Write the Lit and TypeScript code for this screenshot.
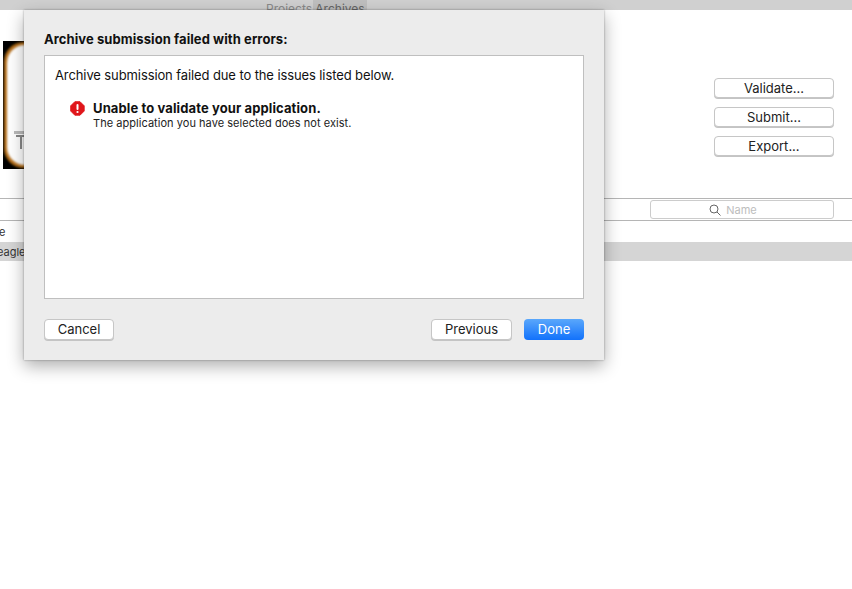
import { LitElement, html, css } from "lit";
import { customElement } from "lit/decorators.js";

@customElement("app-root")
export class AppRoot extends LitElement {
  static styles = css`
    :host { display: block; position: relative; width: 852px; height: 589px; overflow: hidden; background: #fff; font-family: Inter, "Liberation Sans", sans-serif; color: #1a1a1a; font-size: 13px; }
    .tabs { height: 10px; background: #d0d0d0; display: flex; justify-content: flex-start; padding-left: 266px; overflow: hidden; font-size: 12px; line-height: 10px; color: #8a8a8a; }
    .tab { height: 10px; display: flex; align-items: flex-end; line-height: 12px; white-space: nowrap; }
    .tab span { position: relative; top: 5px; }
    .tab.p { width: 47px; }
    .tab.a { width: 54px; background: #bfbfbf; color: #666; justify-content: center; }
    .head { height: 188px; display: flex; justify-content: space-between; box-sizing: border-box; padding: 31px 18px 0 3px; }
    .thumb { width: 40px; height: 128px; background: #000; display: block; }
    .side { display: flex; flex-direction: column; gap: 9px; padding-top: 37px; }
    .btn { box-sizing: border-box; background: #fff; border: 1px solid #c6c6c6; border-radius: 4px; height: 21px; display: flex; align-items: center; justify-content: center; font-size: 13px; line-height: 17px; padding-bottom: 1px; box-shadow: 0 1px 0 #c4c4c4; color: #222; }
    .side .btn { width: 120px; height: 20px; padding-bottom: 0; }
    .bar { height: 23px; box-sizing: border-box; border-top: 1px solid #b5b5b5; border-bottom: 1px solid #b5b5b5; display: flex; justify-content: flex-end; padding: 1px 18px 0 0; }
    .search { box-sizing: border-box; width: 184px; height: 19px; border: 1px solid #ccc; border-radius: 3px; background: #fff; display: flex; align-items: center; justify-content: center; gap: 5px; color: #bdbdbd; font-size: 11px; padding-right: 18px; }
    .row { height: 21px; display: flex; align-items: center; font-size: 11px; overflow: hidden; color: #333; }
    .row.sel { height: 19px; background: #d5d5d5; }
    .row span { white-space: nowrap; margin-left: -1px; }
    .row.sel span { margin-left: -3px; }
    .dialog { position: absolute; left: 24px; top: 10px; width: 580px; height: 350px; box-sizing: border-box; background: #ececec; padding: 19px 20px 0; box-shadow: 0 0 2px rgba(0,0,0,.35), 0 6px 16px rgba(0,0,0,.32); display: flex; flex-direction: column; }
    .title { font-weight: 700; font-size: 13px; line-height: 20px; color: #111; letter-spacing: .08px; white-space: nowrap; }
    .panel { margin-top: 6px; height: 244px; box-sizing: border-box; background: #fff; border: 1px solid #bfbfbf; padding: 10px 10px 0; }
    .intro { line-height: 18px; font-size: 13px; letter-spacing: -.105px; white-space: nowrap; color: #111; }
    .issue { display: flex; gap: 8px; margin: 15px 0 0 15px; }
    .issue svg { flex: none; margin-top: 2px; }
    .issue b { display: block; font-weight: 700; font-size: 13px; line-height: 15px; padding-top: 2px; color: #111; letter-spacing: .11px; }
    .issue small { display: block; font-size: 11px; line-height: 15px; color: #222; letter-spacing: .04px; }
    .foot { display: flex; justify-content: space-between; margin-top: 20px; }
    .foot .btn { height: 21px; }
    .cancel { width: 70px; }
    .prev { width: 81px; }
    .done { width: 60px; border: none; background: linear-gradient(#5aa7fb, #1272fb); color: #fff; box-shadow: none; }
    .right { display: flex; gap: 12px; }
  `;

  render() {
    return html`
      <div class="tabs"><div class="tab p"><span>Projects</span></div><div class="tab a"><span>Archives</span></div></div>
      <div class="head">
        <svg class="thumb" viewBox="0 0 40 128">
          <defs><filter id="b"><feGaussianBlur stdDeviation="1"/></filter></defs>
          <rect width="40" height="128" fill="#000"/>
          <rect x="1" y="1" width="60" height="126" rx="20" fill="#b5701a" filter="url(#b)"/>
          <rect x="4" y="4" width="60" height="120" rx="18" fill="#fff" filter="url(#b)"/>
          <rect x="11" y="90" width="12" height="3" fill="#bbb"/>
          <path d="M13 95h10M18 95v13" stroke="#888" stroke-width="2" fill="none"/>
        </svg>
        <div class="side">
          <div class="btn">Validate...</div>
          <div class="btn">Submit...</div>
          <div class="btn">Export...</div>
        </div>
      </div>
      <div class="bar">
        <div class="search">
          <svg width="12" height="12" viewBox="0 0 12 12" fill="none" stroke="#666" stroke-width="1"><circle cx="5" cy="5" r="4"/><path d="M8 8l3.500 3.500"/></svg>
          Name
        </div>
      </div>
      <div class="row"><span>e</span></div>
      <div class="row sel"><span>eagle</span></div>

      <div class="dialog">
        <div class="title">Archive submission failed with errors:</div>
        <div class="panel">
          <div class="intro">Archive submission failed due to the issues listed below.</div>
          <div class="issue">
            <svg width="15" height="15" viewBox="0 0 15 15">
              <path d="M4.600 0h5.800L15 4.600v5.800L10.400 15H4.600L0 10.400V4.600z" fill="#e0161b" stroke="#e0161b" stroke-linejoin="round" transform="translate(.7 .7) scale(.9)"/>
              <rect x="6.500" y="3" width="2" height="6" rx="1" fill="#fff"/>
              <circle cx="7.500" cy="11" r="1.100" fill="#fff"/>
            </svg>
            <div>
              <b>Unable to validate your application.</b>
              <small>The application you have selected does not exist.</small>
            </div>
          </div>
        </div>
        <div class="foot">
          <div class="btn cancel">Cancel</div>
          <div class="right">
            <div class="btn prev">Previous</div>
            <div class="btn done">Done</div>
          </div>
        </div>
      </div>
    `;
  }
}
